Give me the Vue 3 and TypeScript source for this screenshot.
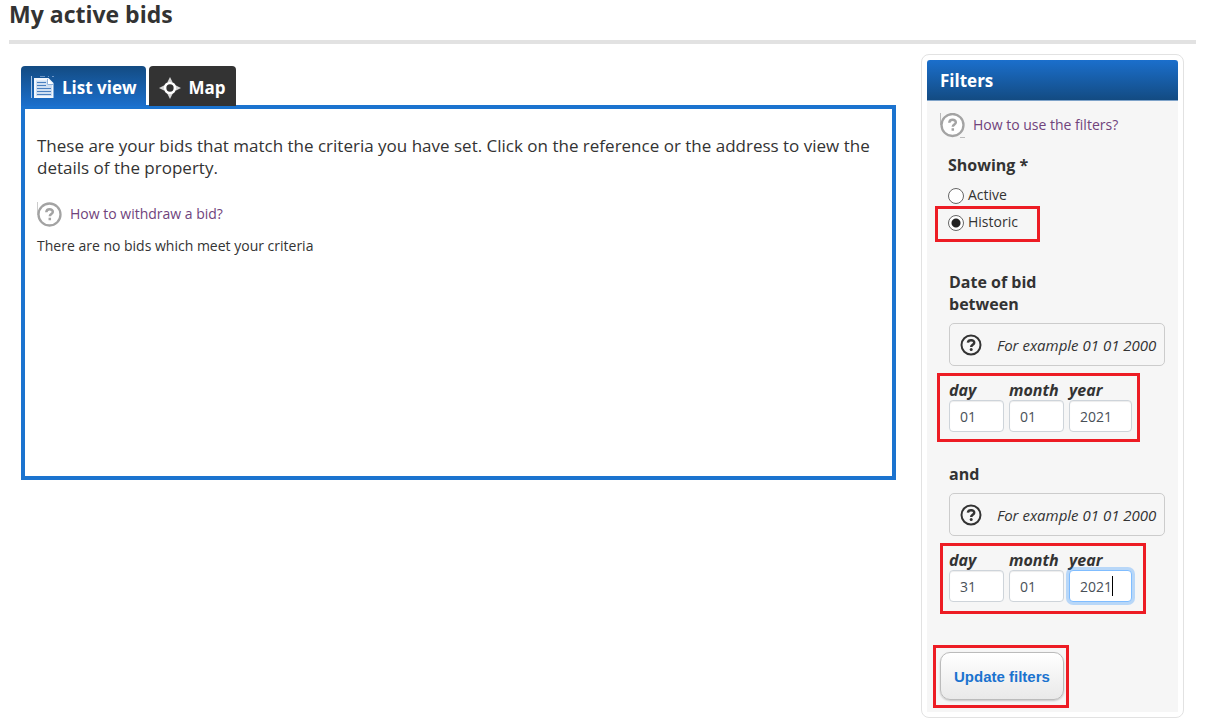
<script setup lang="ts">
import { ref } from 'vue'

interface DatePart {
  name: string
  value: string
  active?: boolean
}

interface DateGroup {
  id: string
  title: string
  parts: DatePart[]
}

const showing = ref('historic')

const groups = ref<DateGroup[]>([
  {
    id: 'from',
    title: 'Date of bid between',
    parts: [
      { name: 'day', value: '01' },
      { name: 'month', value: '01' },
      { name: 'year', value: '2021' },
    ],
  },
  {
    id: 'to',
    title: 'and',
    parts: [
      { name: 'day', value: '31' },
      { name: 'month', value: '01' },
      { name: 'year', value: '2021', active: true },
    ],
  },
])
</script>

<template>
  <div class="page">
    <h1>My active bids</h1>
    <div class="columns">
      <main>
        <nav class="tabs">
          <a href="#list" class="tab tab-active">
            <svg width="24" height="24" viewBox="0 0 24 24" aria-hidden="true">
              <path d="M0.5 0v22" stroke="#a9c4e4" stroke-width="1" />
              <path d="M9 .5h5M17 .5h1M21 .5h2" stroke="#6d96c6" stroke-width="1" />
              <path d="M3 2h14.500L22.500 7V22H3z" fill="#f2f7fd" />
              <path d="M5 4.500H16V9h5V20H5z" fill="#cfdff2" />
              <path d="M16.500 3v5.500H22" fill="#fff" stroke="#8fb3dc" stroke-width="1" />
              <path d="M6 6.500h9M6 9.500h9M6 12.500h14M6 15.500h14M6 18.500h14" stroke="#4a80c0" stroke-width="1" />
            </svg>
            <span>List view</span>
          </a>
          <a href="#map" class="tab tab-map">
            <svg width="22" height="22" viewBox="0 0 22 22" aria-hidden="true">
              <circle cx="11" cy="11" r="5" fill="none" stroke="#fff" stroke-width="2.700" />
              <path d="M11 0l2.500 5h-5zM11 22l2.500-5h-5zM0 11l5-2.500v5zM22 11l-5-2.500v5z" fill="#d8d8d8" />
            </svg>
            <span>Map</span>
          </a>
        </nav>
        <section class="panel">
          <p class="intro">
            These are your bids that match the criteria you have set. Click on the reference or the address to view the
            details of the property.
          </p>
          <a href="#withdraw" class="help">
            <svg width="25" height="25" viewBox="0 0 25 25" aria-hidden="true">
              <path d="M.5 0v13" stroke="#ccc" />
              <circle cx="12.500" cy="12.500" r="11" fill="#fff" stroke="#a3a3a3" stroke-width="2.300" />
              <path d="M9.300 10.300c.2-4.300 6.700-3.800 6.500-.3-.1 2.100-3 2-3 4.300M12.800 15.800v2.400" fill="none" stroke="#a3a3a3" stroke-width="2.500" />
            </svg>
            <span>How to withdraw a bid?</span>
          </a>
          <p class="empty">There are no bids which meet your criteria</p>
        </section>
      </main>

      <aside>
        <form class="filters" @submit.prevent>
          <h2>Filters</h2>
          <a href="#filters-help" class="help filters-help">
            <svg width="25" height="25" viewBox="0 0 25 25" aria-hidden="true">
              <path d="M.5 0v12M20 24.500h5" stroke="#bbb" />
              <circle cx="12.500" cy="12" r="11" fill="#fff" stroke="#a3a3a3" stroke-width="2.300" />
              <path d="M9.300 9.800c.2-4.300 6.700-3.800 6.500-.3-.1 2.100-3 2-3 4.300M12.800 15.300v2.400" fill="none" stroke="#a3a3a3" stroke-width="2.500" />
            </svg>
            <span>How to use the filters?</span>
          </a>

          <fieldset class="showing">
            <legend>Showing *</legend>
            <label class="option" for="active">
              <input id="active" v-model="showing" type="radio" name="showing" value="active" />Active
            </label>
            <label class="option marked mark-option" for="historic">
              <input id="historic" v-model="showing" type="radio" name="showing" value="historic" />Historic
            </label>
          </fieldset>

          <fieldset v-for="group in groups" :key="group.id" class="date">
            <legend>{{ group.title }}</legend>
            <div class="hint">
              <svg width="22" height="22" viewBox="0 0 22 22" aria-hidden="true">
                <circle cx="11" cy="11" r="9.500" fill="none" stroke="#333" stroke-width="2" />
                <path d="M7.900 8.600c.5-3.400 6.600-3.100 6.300.2-.2 2-3 2.100-3 4.200" fill="none" stroke="#333" stroke-width="2.500" />
                <circle cx="11.200" cy="15.600" r="1.500" fill="#333" />
              </svg>
              <span>For example 01 01 2000</span>
            </div>
            <div class="parts marked" :class="`mark-${group.id}`">
              <div v-for="part in group.parts" :key="part.name" class="part" :class="`part-${part.name}`">
                <label :for="`${group.id}-${part.name}`">{{ part.name }}</label>
                <div class="box">
                  <input
                    :id="`${group.id}-${part.name}`"
                    v-model="part.value"
                    type="text"
                    inputmode="numeric"
                    :class="{ current: part.active }"
                  />
                  <span v-if="part.active" class="caret"></span>
                </div>
              </div>
            </div>
          </fieldset>

          <div class="actions marked mark-button">
            <button type="submit">Update filters</button>
          </div>
        </form>
      </aside>
    </div>
  </div>
</template>

<style>
body {
  margin: 0;
  background: #fff;
}
</style>

<style scoped>
* {
  box-sizing: border-box;
}

.page {
  padding: 0 10px 6px 9px;
  font-family: 'Open Sans', 'Noto Sans', sans-serif;
  font-size: 14px;
  line-height: 20px;
  color: #333;
}

h1 {
  margin: 0;
  padding-bottom: 12px;
  border-bottom: 4px solid #e2e2e2;
  font-size: 23px;
  line-height: 28px;
  font-weight: 700;
}

.columns {
  display: flex;
  align-items: flex-start;
  gap: 25px;
  padding: 10px 12px 0;
}

main {
  flex: 1;
  min-width: 0;
  padding-top: 12px;
}

.tabs {
  display: flex;
  gap: 3px;
}

.tab {
  display: flex;
  align-items: center;
  height: 40px;
  padding: 4px 10px 0;
  border-radius: 4px 4px 0 0;
  background: #333;
  color: #fff;
  font-size: 17px;
  font-weight: 700;
  text-decoration: none;
  gap: 7px;
}

.tab-active {
  padding-right: 9px;
  background: linear-gradient(#134b82, #1b6fcc);
}

.tab-map {
  position: relative;
  gap: 8px;
}

.panel {
  margin-top: -1px;
  min-height: 375px;
  padding: 26px 12px;
  border: 4px solid #1b73cf;
}

.intro {
  margin: 0 0 23px;
  font-size: 17px;
  line-height: 22px;
}

.help {
  display: flex;
  align-items: center;
  gap: 8px;
  color: #70437c;
  text-decoration: none;
}

.help span {
  padding-bottom: 2px;
}

.empty {
  margin: 9px 0 0;
}

aside {
  width: 263px;
  flex: none;
  padding: 5px;
  border: 1px solid #e2e2e2;
  border-radius: 8px;
}

.filters {
  display: flow-root;
  background: #f6f6f6;
  padding-bottom: 12px;
}

h2 {
  margin: 0;
  padding: 1px 13px 0;
  border-bottom: 1px solid #7fa3c9;
  border-radius: 3px 3px 0 0;
  background: linear-gradient(#1b6fcc, #134b82);
  color: #fff;
  font-size: 17px;
  line-height: 39px;
  font-weight: 700;
}

.filters-help {
  padding: 12px 13px 0;
}

fieldset {
  margin: 0;
  padding: 0 13px 0 22px;
  border: 0;
  min-width: 0;
}

legend {
  padding: 0;
  font-size: 16px;
  line-height: 22px;
  font-weight: 700;
}

.showing {
  margin-top: 16px;
  padding-left: 21px;
  padding-bottom: 5px;
}

.showing legend {
  margin-bottom: 5px;
}

.option {
  display: flex;
  align-items: center;
  width: 92px;
  height: 27px;
  gap: 4px;
}

input[type='radio'] {
  appearance: none;
  width: 16px;
  height: 16px;
  margin: 2px 0 0;
  border: 1px solid #666;
  border-radius: 50%;
  background: #fff;
}

input[type='radio']:checked {
  background: radial-gradient(circle, #222 4px, #fff 5px);
}

.marked {
  position: relative;
}

.marked::after {
  content: '';
  position: absolute;
  border: 3px solid #ed1c24;
  pointer-events: none;
}

.mark-option::after {
  inset: -2px 0 -7px -13px;
}

.mark-from::after {
  inset: -7px 25px -10px -12px;
}

.mark-to::after {
  inset: -7px 19px -12px -9px;
}

.mark-button::after {
  inset: -7px -5px -8px -7px;
}

.date {
  margin-top: 31px;
}

.date legend {
  width: 100px;
}

.hint {
  display: flex;
  align-items: center;
  gap: 15px;
  height: 43px;
  margin-top: 8px;
  padding: 0 8px 0 10px;
  border: 1px solid #ccc;
  border-radius: 5px;
  font-size: 15px;
  font-style: italic;
  white-space: nowrap;
}

.hint svg {
  flex: none;
}

.parts {
  display: flex;
  gap: 5px;
  margin-top: 14px;
}

.part {
  width: 55px;
}

.part-year {
  width: 63px;
}

.part label {
  display: block;
  font-size: 16px;
  font-style: italic;
  font-weight: 700;
}

.box {
  position: relative;
}

.box input {
  display: block;
  width: 100%;
  height: 32px;
  padding: 0 10px;
  border: 1px solid #ced4da;
  border-radius: 4px;
  background: #fff;
  box-shadow: inset 0 1px 1px rgba(0, 0, 0, 0.075);
  color: #495057;
  font: inherit;
  outline: none;
}

.box input.current {
  border-color: #80bdff;
  box-shadow: 0 0 0 3px rgba(0, 123, 255, 0.25);
}

.caret {
  position: absolute;
  top: 6px;
  left: 43px;
  width: 1px;
  height: 20px;
  background: #000;
}

.actions {
  width: fit-content;
  margin: 50px 0 0 13px;
}

button {
  display: block;
  height: 48px;
  padding: 0 13px;
  border: 1px solid #bbb;
  border-radius: 10px;
  background: linear-gradient(#fff, #e9e9e9);
  box-shadow: 0 1px 2px rgba(0, 0, 0, 0.2);
  color: #1b73cf;
  font: 700 15px 'Liberation Sans', Arial, sans-serif;
}
</style>
